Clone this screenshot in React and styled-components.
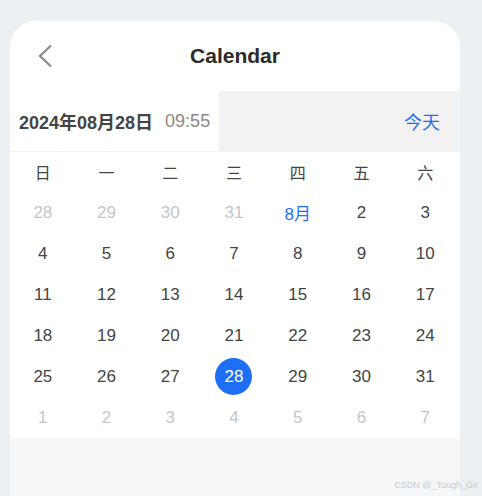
import React from 'react'
import styled, { createGlobalStyle } from 'styled-components'

const GlobalStyle = createGlobalStyle`
  html, body {
    margin: 0;
    padding: 0;
    background: #edf0f3;
    font-family: 'Liberation Sans', Arial, 'Noto Sans CJK SC', sans-serif;
  }
`

const WEEK = ['日', '一', '二', '三', '四', '五', '六']

const buildDays = () => {
  const days = []
  ;[28, 29, 30, 31].forEach((d) => days.push({ label: d, muted: true }))
  days.push({ label: '8月', month: true })
  for (let d = 2; d <= 31; d++) days.push({ label: d, selected: d === 28 })
  for (let d = 1; d <= 7; d++) days.push({ label: d, muted: true })
  return days
}

const App = () => {
  const days = buildDays()
  return (
    <>
      <GlobalStyle />
      <Page>
        <Card>
          <Header>
            <BackButton aria-label="back">
              <svg width="14" height="24" viewBox="0 0 14 24" fill="none">
                <path d="M13 1.5 L2 12 L13 22.5" stroke="#8a8a8a" strokeWidth="2.2" />
              </svg>
            </BackButton>
            <Title>Calendar</Title>
          </Header>
          <InfoRow>
            <Current>
              <DateText>2024年08月28日</DateText>
              <TimeText>09:55</TimeText>
            </Current>
            <TodayBox>
              <TodayLink>今天</TodayLink>
            </TodayBox>
          </InfoRow>
          <Grid>
            {WEEK.map((w) => (
              <WeekCell key={w}>{w}</WeekCell>
            ))}
            {days.map((d, i) => (
              <DayCell key={i}>
                <Day $muted={d.muted} $month={d.month} $selected={d.selected}>
                  {d.label}
                </Day>
              </DayCell>
            ))}
          </Grid>
          <Footer>
            <Watermark>CSDN @_Tough_Gir</Watermark>
          </Footer>
        </Card>
      </Page>
    </>
  )
}

export default App

const Page = styled.div`
  width: 482px;
  height: 496px;
  padding: 21px 22px 0 10px;
  box-sizing: border-box;
  overflow: hidden;
`
const Card = styled.div`
  width: 450px;
  height: 475px;
  display: flex;
  flex-direction: column;
  background: #f5f6f8;
  border-radius: 26px 26px 0 0;
`
const Header = styled.div`
  height: 70px;
  display: flex;
  align-items: center;
  justify-content: center;
  position: relative;
  background: #fff;
  border-radius: 26px 26px 0 0;
`
const BackButton = styled.div`
  position: absolute;
  left: 28px;
  top: 23px;
  display: flex;
`
const Title = styled.h1`
  margin: 0;
  font-size: 21px;
  font-weight: 700;
  color: #2b2b2b;
`
const InfoRow = styled.div`
  height: 60px;
  display: flex;
  background: #fff;
  border-bottom: 1px solid #f0f1f3;
`
const Current = styled.div`
  display: flex;
  align-items: center;
  gap: 12px;
  padding: 0 9px;
  background: #fff;
`
const DateText = styled.span`
  font-size: 18px;
  font-weight: 700;
  color: #444;
`
const TimeText = styled.span`
  font-size: 18px;
  color: #888;
`
const TodayBox = styled.div`
  flex: 1;
  display: flex;
  align-items: center;
  justify-content: flex-end;
  padding-right: 20px;
  background: #f2f2f2;
`
const TodayLink = styled.span`
  font-size: 18px;
  color: #1e6ff5;
`
const Grid = styled.div`
  display: grid;
  grid-template-columns: repeat(7, 1fr);
  grid-template-rows: 40px repeat(6, 41px);
  padding: 0 3px 0 1px;
  background: #fff;
`
const WeekCell = styled.div`
  display: flex;
  align-items: center;
  justify-content: center;
  font-size: 16px;
  color: #444;
  padding-bottom: 1px;
`
const DayCell = styled.div`
  display: flex;
  align-items: center;
  justify-content: center;
`
const Day = styled.div`
  width: 37px;
  height: 37px;
  border-radius: 50%;
  display: flex;
  align-items: center;
  justify-content: center;
  font-size: 17px;
  background: ${(p) => (p.$selected ? '#1e6ff5' : 'transparent')};
  color: ${(p) =>
    p.$selected ? '#fff' : p.$month ? '#1e6ff5' : p.$muted ? '#c3c6cd' : '#444'};
`
const Footer = styled.div`
  flex: 1;
  position: relative;
`
const Watermark = styled.span`
  position: absolute;
  right: -18px;
  bottom: 6px;
  font-size: 9px;
  color: #c9ccd1;
`
